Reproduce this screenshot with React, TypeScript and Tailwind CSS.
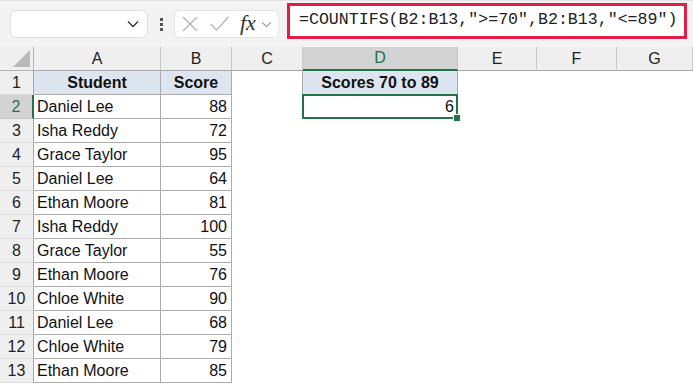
import React from "react";

const rows: [string, number][] = [
  ["Daniel Lee", 88],
  ["Isha Reddy", 72],
  ["Grace Taylor", 95],
  ["Daniel Lee", 64],
  ["Ethan Moore", 81],
  ["Isha Reddy", 100],
  ["Grace Taylor", 55],
  ["Ethan Moore", 76],
  ["Chloe White", 90],
  ["Daniel Lee", 68],
  ["Chloe White", 79],
  ["Ethan Moore", 85],
];

const cols = ["A", "B", "C", "D", "E", "F", "G"];

function Chevron({ className }: { className?: string }) {
  return (
    <svg viewBox="0 0 12 8" className={className} fill="none" stroke="currentColor" strokeWidth="1.3">
      <path d="M1 1.5 L6 6.5 L11 1.5" />
    </svg>
  );
}

function FormulaBar() {
  return (
    <div className="h-[47px] bg-[#f3f3f3] border-t border-[#e2e2e2] flex items-center relative">
      <div className="ml-[10px] w-[138px] h-[28px] bg-white rounded-md border border-[#dedede] flex items-center justify-end pr-[8px]">
        <Chevron className="w-[12px] h-[8px] text-[#333]" />
      </div>
      <div className="ml-[11px] w-[4px] flex flex-col gap-[2px] items-center">
        <span className="w-[3px] h-[3px] bg-[#555]" />
        <span className="w-[3px] h-[3px] bg-[#555]" />
        <span className="w-[3px] h-[3px] bg-[#555]" />
      </div>
      <div className="ml-[11px] w-[105px] h-[28px] bg-white rounded-md border border-[#e4e4e4] flex items-center">
        <svg viewBox="0 0 16 16" className="ml-[7px] w-[16px] h-[16px] text-[#b0b0b0]" fill="none" stroke="currentColor" strokeWidth="1.2">
          <path d="M1 1 L15 15 M15 1 L1 15" />
        </svg>
        <svg viewBox="0 0 20 16" className="ml-[11px] w-[21px] h-[16px] text-[#b0b0b0]" fill="none" stroke="currentColor" strokeWidth="1.2">
          <path d="M1 8 L7 14 L19 1" />
        </svg>
        <span
          className="ml-[10px] text-[22px] italic text-[#333] leading-none -mt-[3px]"
          style={{ fontFamily: '"Liberation Serif", serif' }}
        >
          fx
        </span>
        <Chevron className="ml-[5px] w-[11px] h-[7px] text-[#999]" />
      </div>
      <div className="ml-[8px] w-[400px] h-[36px] -mt-[7px] bg-white border-[3px] border-[#e11d48] flex items-center pl-[9px]">
        <span className="text-[16.6px] text-[#222] font-['Liberation_Mono',monospace]">
          =COUNTIFS(B2:B13,"&gt;=70",B2:B13,"&lt;=89")
        </span>
      </div>
    </div>
  );
}

export default function App() {
  const tableBorder = "border-[#ababab]";
  return (
    <div className="w-[693px] h-[384px] overflow-hidden bg-white font-['Liberation_Sans',Arial,sans-serif] text-[#111]">
      <FormulaBar />
      <div className="grid grid-cols-[34px_127px_71px_71px_155px_79px_80px_1fr] grid-rows-[repeat(14,24px)] relative">
        {/* corner */}
        <div className="bg-[#efefef] border-r border-b border-[#b4b4b4] relative">
          <div className="absolute right-[3px] bottom-[3px] w-0 h-0 border-l-[17px] border-l-transparent border-b-[17px] border-b-[#b9b9b9]" />
        </div>
        {cols.map((c) =>
          c === "D" ? (
            <div key={c} className="bg-[#d3d3d3] border-r border-[#c4c4c4] border-b-2 border-b-[#217346] flex items-center justify-center text-[16px] text-[#217346]">
              {c}
            </div>
          ) : (
            <div key={c} className="bg-[#efefef] border-r border-[#c8c8c8] border-b border-b-[#a8a8a8] flex items-center justify-center text-[16px] text-[#222]">
              {c}
            </div>
          )
        )}

        {/* row 1 */}
        <div className="bg-[#efefef] border-r border-[#a8a8a8] border-b border-b-[#dedede] flex items-center justify-center text-[16px] text-[#222]">1</div>
        <div className={`bg-[#dde6f0] border-r border-b ${tableBorder} flex items-center justify-center font-bold text-[16px]`}>Student</div>
        <div className={`bg-[#dde6f0] border-r border-b ${tableBorder} flex items-center justify-center font-bold text-[16px]`}>Score</div>
        <div />
        <div className={`bg-[#dde6f0] border-r border-b ${tableBorder} flex items-center justify-center font-bold text-[16px] -ml-px border-l`}>Scores 70 to 89</div>
        <div />
        <div />
        <div />

        {rows.map(([name, score], i) => {
          const n = i + 2;
          const sel = n === 2;
          return (
            <React.Fragment key={n}>
              <div
                className={
                  sel
                    ? "bg-[#d3d3d3] border-r-2 border-r-[#217346] border-b border-b-[#c8c8c8] flex items-center justify-center text-[16px] text-[#217346]"
                    : "bg-[#efefef] border-r border-r-[#a8a8a8] border-b border-b-[#dedede] flex items-center justify-center text-[16px] text-[#222]"
                }
              >
                {n}
              </div>
              <div className={`border-r border-b ${tableBorder} flex items-center pl-[3px] text-[16px] whitespace-nowrap`}>{name}</div>
              <div className={`border-r border-b ${tableBorder} flex items-center justify-end pr-[4px] text-[16px]`}>{score}</div>
              <div />
              {sel ? (
                <div className="relative flex items-center justify-end pr-[4px] text-[16px]">
                  <div className="absolute -left-px -top-px right-0 bottom-0 border-2 border-[#217346]" />
                  <div className="absolute -right-[3px] -bottom-[3px] w-[6px] h-[6px] bg-[#217346] border border-white box-content" />
                  <span className="relative">6</span>
                </div>
              ) : (
                <div />
              )}
              <div />
              <div />
              <div />
            </React.Fragment>
          );
        })}
      </div>
    </div>
  );
}
